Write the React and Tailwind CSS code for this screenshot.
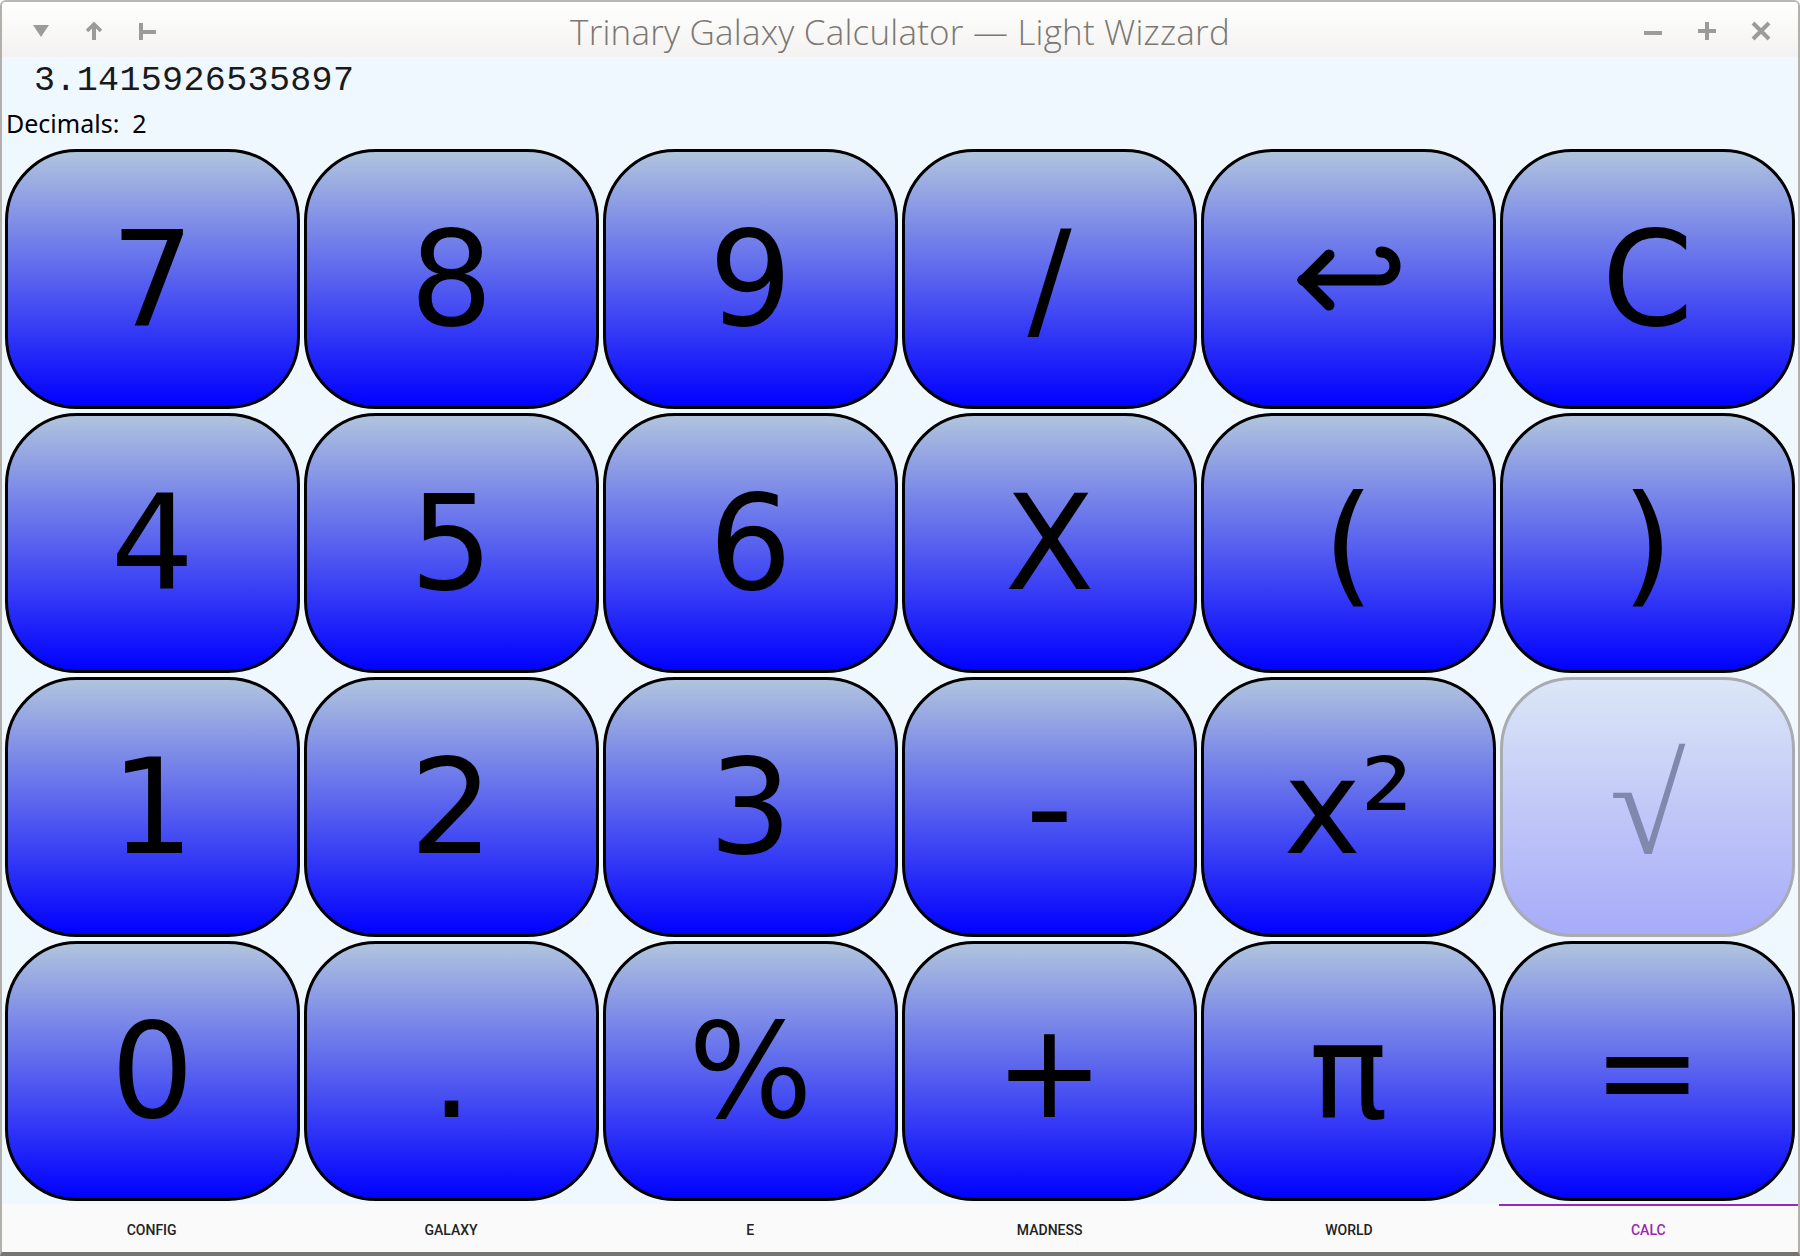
import React from "react";

const keys = [
  ["7", "8", "9", "/", "ENTER", "C"],
  ["4", "5", "6", "X", "(", ")"],
  ["1", "2", "3", "-", "x²", "√"],
  ["0", ".", "%", "+", "π", "="],
];

const tabs = ["Config", "Galaxy", "E", "Madness", "World", "Calc"];

function ReturnIcon() {
  return (
    <svg width="104" height="68" viewBox="0 0 104 68" className="block">
      <path
        d="M6 35 L84 35 A14 14 0 0 0 84 7"
        fill="none"
        stroke="#000"
        strokeWidth="11"
        strokeLinecap="round"
      />
      <path
        d="M32 10 L7 35 L32 60"
        fill="none"
        stroke="#000"
        strokeWidth="11"
        strokeLinecap="round"
        strokeLinejoin="miter"
      />
    </svg>
  );
}

function Key({ k }) {
  if (k === "√") {
    return (
      <div className="flex items-center justify-center rounded-[72px] border-[3px] border-[#a8abb0] bg-[linear-gradient(to_bottom,#dce6f6,#a7abf9)] leading-none">
        <span className="font-['Liberation_Serif','DejaVu_Serif',serif] font-bold text-[138px] leading-none text-[#8088ae]">√</span>
      </div>
    );
  }
  return (
    <div className="flex items-center justify-center rounded-[72px] border-[3px] border-black bg-[linear-gradient(to_bottom,#b0c4de,#0000ff)] text-black leading-none">
      {k === "ENTER" ? (
        <ReturnIcon />
      ) : (
        <span className="font-['DejaVu_Sans',sans-serif] text-[131px] leading-none">{k}</span>
      )}
    </div>
  );
}

export default function App() {
  return (
    <div className="w-[1800px] h-[1256px] overflow-hidden bg-[#f0f8ff] flex flex-col border-l-2 border-r-2 border-t-2 border-b-4 border-l-[#b3afab] border-r-[#b3afab] border-t-[#b9b6b3] border-b-[#777371] rounded-t-[6px]">
      {/* Title bar */}
      <div className="h-[55px] shrink-0 grid grid-cols-[1fr_auto_1fr] items-center bg-gradient-to-b from-white to-[#f3f2f0] pt-[3px]">
        <div className="flex items-center pl-[30px]">
          <svg width="18" height="14" viewBox="0 0 18 14" className="mr-[35px]">
            <path d="M1 1 L17 1 L9 13 Z" fill="#9b9b9b" />
          </svg>
          <svg width="18" height="20" viewBox="0 0 18 20" className="mr-[36px]">
            <path d="M9 19 L9 5" stroke="#9b9b9b" strokeWidth="4" />
            <path d="M2 10 L9 3 L16 10" fill="none" stroke="#9b9b9b" strokeWidth="3.5" />
          </svg>
          <svg width="18" height="19" viewBox="0 0 18 19">
            <path d="M2 1 L2 18" stroke="#9b9b9b" strokeWidth="4" />
            <path d="M2 10 L17 10" stroke="#9b9b9b" strokeWidth="4" />
          </svg>
        </div>
        <div className="font-['Open_Sans',sans-serif] font-light text-[35px] text-[#7b7773] leading-none whitespace-nowrap tracking-[0.2px]">
          Trinary Galaxy Calculator — Light Wizzard
        </div>
        <div className="flex items-center justify-end pr-[27px]">
          <svg width="20" height="20" viewBox="0 0 20 20" className="mr-[34px]">
            <path d="M1 12 L19 12" stroke="#9b9b9b" strokeWidth="4" />
          </svg>
          <svg width="20" height="20" viewBox="0 0 20 20" className="mr-[34px]">
            <path d="M1 10 L19 10 M10 1 L10 19" stroke="#9b9b9b" strokeWidth="4" />
          </svg>
          <svg width="20" height="20" viewBox="0 0 20 20">
            <path d="M2 2 L18 18 M18 2 L2 18" stroke="#9b9b9b" strokeWidth="4" />
          </svg>
        </div>
      </div>

      {/* Display */}
      <div className="h-[44px] shrink-0 pt-[4px] pl-[32px] font-['Liberation_Mono',monospace] text-[35px] leading-[40px] tracking-[0.35px] text-[#1a1a1a] whitespace-nowrap">
        3.1415926535897
      </div>

      {/* Decimals */}
      <div className="h-[48px] shrink-0 pt-[5px] pl-[4px] font-['Noto_Sans',sans-serif] text-[25px] leading-[34px] text-black whitespace-pre">
        {"Decimals:  2"}
      </div>

      {/* Keypad */}
      <div className="h-[1052px] shrink-0 px-[3px] grid grid-cols-6 grid-rows-4 gap-[4px]">
        {keys.flat().map((k, i) => (
          <Key key={i} k={k} />
        ))}
      </div>

      <div className="h-[3px] shrink-0" />

      {/* Tabs */}
      <div className="h-[48px] shrink-0 grid grid-cols-6 bg-[#fafafa]">
        {tabs.map((t) => {
          const active = t === "Calc";
          return (
            <div
              key={t}
              className={
                "flex items-center justify-center border-t-2 font-['Roboto',sans-serif] font-medium text-[14px] uppercase pt-[2px] " +
                (active ? "border-[#9c27b0] text-[#9c27b0]" : "border-transparent text-[#222]")
              }
            >
              {t}
            </div>
          );
        })}
      </div>
    </div>
  );
}
